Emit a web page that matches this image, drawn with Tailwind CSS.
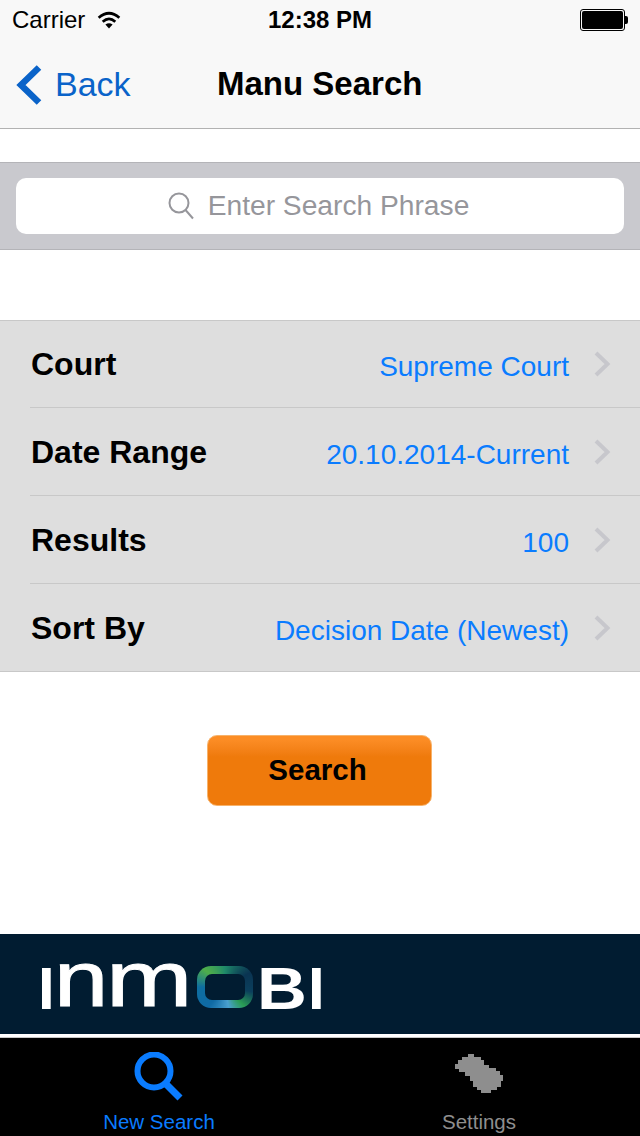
<!DOCTYPE html>
<html lang="en">
<head>
    <meta charset="UTF-8">
    <meta name="viewport" content="width=device-width, initial-scale=1.0">
    <title>Manu Search</title>
    <script src="https://cdn.jsdelivr.net/npm/@tailwindcss/browser@4"></script>
</head>
<body class="bg-white font-['Liberation_Sans',Arial,sans-serif]">
    <div class="w-[640px] h-[1136px] flex flex-col overflow-hidden bg-white">

        <!-- Status + nav bar -->
        <header class="h-[129px] shrink-0 bg-[#f8f8f8] border-b border-[#b2b2b2] flex flex-col">
            <div class="relative h-[40px] flex items-center justify-between pl-3 pr-[12px] text-black text-[24px] leading-none">
                <div class="flex items-center gap-[12px]">
                    <span>Carrier</span>
                    <svg width="24" height="18" viewBox="0 0 26 20" fill="none" stroke="#000" stroke-width="3">
                        <path d="M1.5 7.5 Q13 -2.5 24.5 7.5"/>
                        <path d="M6 12 Q13 5.5 20 12"/>
                        <path d="M13 19.5 L9 15 Q13 12 17 15 Z" fill="#000" stroke="none"/>
                    </svg>
                </div>
                <span class="font-bold absolute left-[268px]">12:38 PM</span>
                <div class="flex items-center">
                    <div class="w-[45px] h-[22px] rounded-[3px] border border-black p-[1px]"><div class="w-full h-full bg-black rounded-[2px]"></div></div>
                    <div class="w-[3px] h-[8px] bg-black rounded-r-[2px]"></div>
                </div>
            </div>
            <div class="relative flex-1 flex items-center">
                <svg class="ml-[16px] mt-[2px]" width="26" height="40" viewBox="0 0 26 40" fill="none" stroke="#0a63c9" stroke-width="6.5">
                    <path d="M23 2.5 L5 20 L23 37.5"/>
                </svg>
                <span class="ml-[13px] text-[34px] leading-none text-[#0a63c9]">Back</span>
                <span class="absolute left-[217px] top-[27px] text-[33px] leading-[34px] font-bold text-black">Manu Search</span>
            </div>
        </header>

        <div class="h-[33px] shrink-0"></div>

        <!-- Search bar -->
        <div class="h-[88px] shrink-0 bg-[#c9c9ce] border-y border-[#b4b4b8] flex items-center px-4">
            <div class="w-full h-[56px] bg-white rounded-[10px] flex items-center justify-center gap-[14px] text-[28.2px] text-[#96969b] pr-[1px]">
                <svg class="-ml-[2px]" width="26" height="28" viewBox="0 0 26 28" fill="none" stroke="#96969b" stroke-width="2">
                    <circle cx="11" cy="11" r="9.5"/>
                    <path d="M17.5 18 L25 26.5"/>
                </svg>
                <span class="pb-[2px]">Enter Search Phrase</span>
            </div>
        </div>

        <div class="h-[70px] shrink-0"></div>

        <!-- Options table -->
        <div class="shrink-0 bg-[#dedede] border-y border-[#c8c8c8]">
            <div class="h-[87px] flex items-center justify-between ml-[30px] pl-px pr-[29px] border-b border-[#c8c8c8]">
                <span class="text-[32px] font-bold text-black">Court</span>
                <div class="flex items-center gap-[25px] text-[28px] text-[#0a7cff]">
                    <span class="pt-[6px]">Supreme Court</span>
                    <svg width="17" height="26" viewBox="0 0 17 26" fill="none" stroke="#c7c7cc" stroke-width="4"><path d="M2 2 L13.5 13 L2 24"/></svg>
                </div>
            </div>
            <div class="h-[88px] flex items-center justify-between ml-[30px] pl-px pr-[29px] border-b border-[#c8c8c8]">
                <span class="text-[32px] font-bold text-black">Date Range</span>
                <div class="flex items-center gap-[25px] text-[28px] text-[#0a7cff]">
                    <span class="pt-[6px]">20.10.2014-Current</span>
                    <svg width="17" height="26" viewBox="0 0 17 26" fill="none" stroke="#c7c7cc" stroke-width="4"><path d="M2 2 L13.5 13 L2 24"/></svg>
                </div>
            </div>
            <div class="h-[88px] flex items-center justify-between ml-[30px] pl-px pr-[29px] border-b border-[#c8c8c8]">
                <span class="text-[32px] font-bold text-black">Results</span>
                <div class="flex items-center gap-[25px] text-[28px] text-[#0a7cff]">
                    <span class="pt-[6px]">100</span>
                    <svg width="17" height="26" viewBox="0 0 17 26" fill="none" stroke="#c7c7cc" stroke-width="4"><path d="M2 2 L13.5 13 L2 24"/></svg>
                </div>
            </div>
            <div class="h-[87px] flex items-center justify-between ml-[30px] pl-px pr-[29px]">
                <span class="text-[32px] font-bold text-black">Sort By</span>
                <div class="flex items-center gap-[25px] text-[28px] text-[#0a7cff]">
                    <span class="pt-[6px]">Decision Date (Newest)</span>
                    <svg width="17" height="26" viewBox="0 0 17 26" fill="none" stroke="#c7c7cc" stroke-width="4"><path d="M2 2 L13.5 13 L2 24"/></svg>
                </div>
            </div>
        </div>

        <!-- Search button -->
        <div class="h-[262px] shrink-0 pt-[63px] pl-[207px]">
            <button class="w-[225px] h-[71px] pr-[4px] rounded-[10px] border border-[#f7b26a] bg-gradient-to-b from-[#fc8d25] from-[5%] to-[#ef7a0b] to-[30%] text-[29.5px] font-bold text-black">Search</button>
        </div>

        <!-- Ad banner -->
        <div class="h-[100px] shrink-0 bg-[#011c31] overflow-hidden pl-[42px] flex items-center">
            <div class="relative w-[282px] h-[44px] text-white leading-none blur-[0.6px]">
                <span class="absolute left-[-4px] top-[-3px] text-[60px] font-bold">I</span>
                <span class="absolute left-[12px] top-[-22px] text-[78px] font-normal scale-x-[1.25] origin-left [-webkit-text-stroke:1px_white]">n</span>
                <span class="absolute left-[64px] top-[-22px] text-[78px] font-normal scale-x-[1.33] origin-left [-webkit-text-stroke:1px_white]">m</span>
                <div class="absolute left-[155px] top-[4px] w-[56px] h-[42px] rounded-[14px] bg-[conic-gradient(#1f8a6a_0deg,#0a3452_60deg,#0b3f5c_100deg,#2a9c55_135deg,#4aa0d0_170deg,#0f6aa5_220deg,#0e6ea0_270deg,#4fae4a_310deg,#1f8a6a_360deg)] p-[8px]">
                    <div class="w-full h-full rounded-[7px] bg-[#011c31]"></div>
                </div>
                <span class="absolute left-[215px] top-[-3px] text-[60px] font-bold scale-x-[1.15] origin-left">B</span>
                <span class="absolute left-[266px] top-[-3px] text-[60px] font-bold origin-left">I</span>
            </div>
        </div>

        <div class="h-[4px] shrink-0 bg-white border-b border-[#c8c8c8]"></div>

        <!-- Tab bar -->
        <nav class="flex-1 bg-black flex">
            <div class="w-1/2 flex flex-col items-center pt-[14px] pr-[2px]">
                <svg width="50" height="50" viewBox="0 0 50 50" fill="none" stroke="#0a7cff">
                    <circle cx="20" cy="19" r="16.5" stroke-width="6"/>
                    <path d="M32 32 L46 46" stroke-width="7"/>
                </svg>
                <span class="mt-[8px] text-[20.5px] leading-[24px] text-[#0a7cff]">New Search</span>
            </div>
            <div class="w-1/2 flex flex-col items-center pt-[14px] pr-[2px]">
                <svg width="50" height="50" viewBox="0 0 50 50" fill="#8e8e8e">
                    <path d="M14 2 L20 2 L20 5 L27 5 L27 8 L30 8 L30 13 L35 13 L35 16 L42 16 L42 19 L46 19 L46 23 L49 23 L49 29 L47 29 L47 35 L43 35 L43 38 L37 38 L37 41 L27 41 L27 38 L23 38 L23 35 L19 35 L19 29 L16 29 L16 24 L11 24 L11 20 L5 20 L5 17 L1 17 L1 12 L4 12 L4 8 L8 8 L8 5 L14 5 Z"/>
                </svg>
                <span class="mt-[8px] text-[20.5px] leading-[24px] text-[#8e8e8e]">Settings</span>
            </div>
        </nav>
    </div>
</body>
</html>
